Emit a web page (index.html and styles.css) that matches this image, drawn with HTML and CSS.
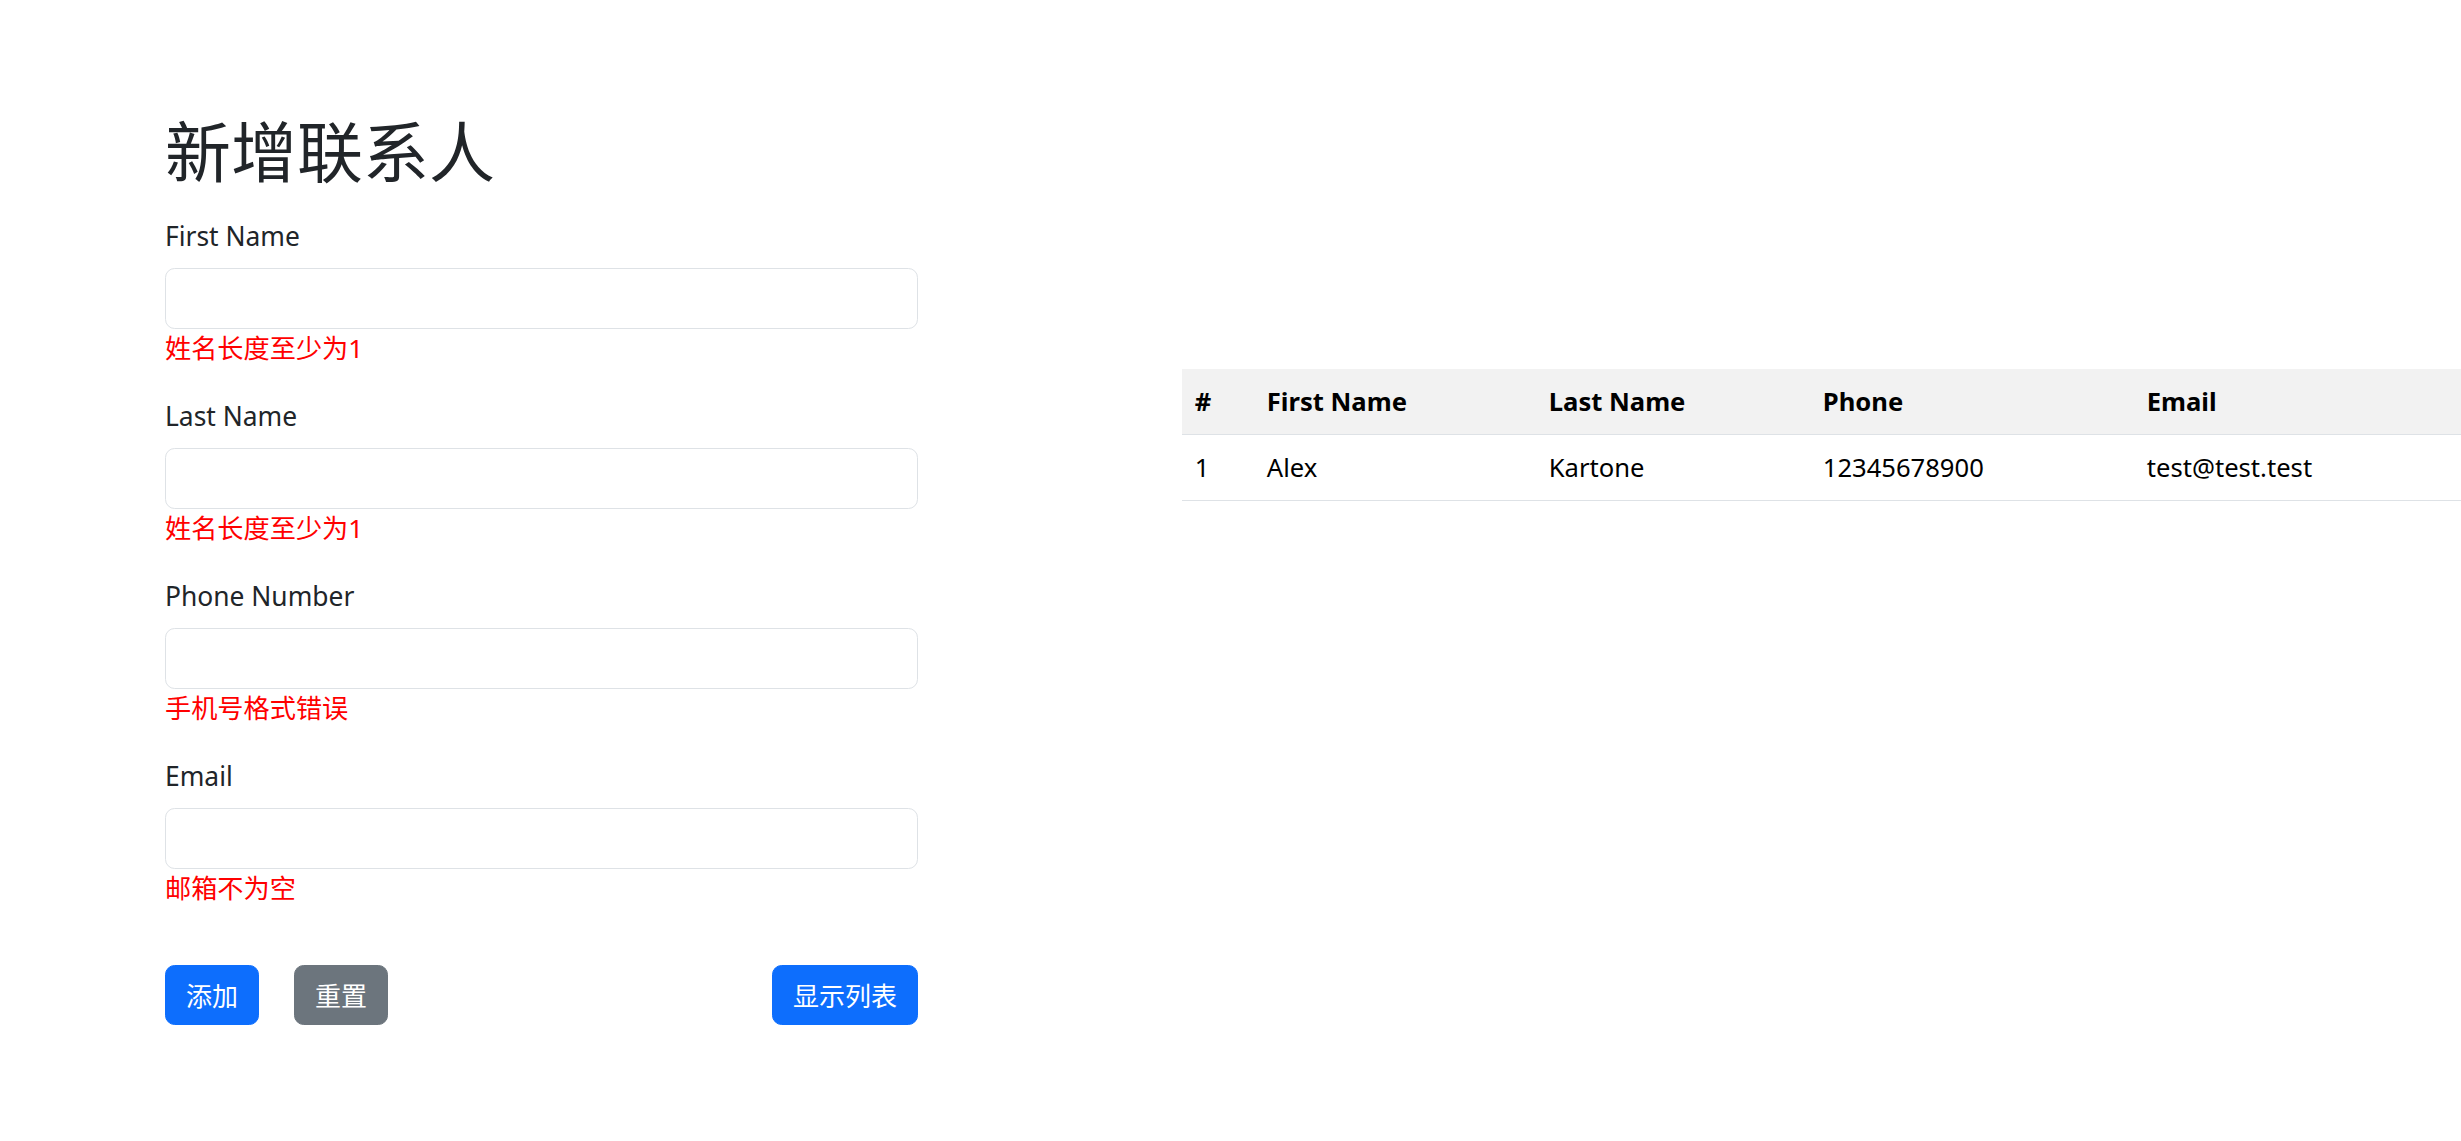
FILE: index.html
```html
<!DOCTYPE html>
<html lang="zh-CN">
<head>
<meta charset="utf-8">
<title>新增联系人</title>
<link rel="stylesheet" href="styles.css">
</head>
<body>
<main class="page">
  <section class="form-col">
    <h1 class="title">新增联系人</h1>
    <form class="contact-form">
      <div class="field">
        <label class="field-label">First Name</label>
        <input class="field-input" type="text">
        <div class="field-error">姓名长度至少为1</div>
      </div>
      <div class="field">
        <label class="field-label">Last Name</label>
        <input class="field-input" type="text">
        <div class="field-error">姓名长度至少为1</div>
      </div>
      <div class="field">
        <label class="field-label">Phone Number</label>
        <input class="field-input" type="text">
        <div class="field-error">手机号格式错误</div>
      </div>
      <div class="field">
        <label class="field-label">Email</label>
        <input class="field-input" type="text">
        <div class="field-error">邮箱不为空</div>
      </div>
      <div class="actions">
        <button type="button" class="btn btn-primary">添加</button>
        <button type="button" class="btn btn-secondary">重置</button>
        <button type="button" class="btn btn-primary btn-right">显示列表</button>
      </div>
    </form>
  </section>
  <section class="table-col">
    <table class="contacts">
      <thead>
        <tr>
          <th class="c-idx">#</th>
          <th class="c-first">First Name</th>
          <th class="c-last">Last Name</th>
          <th class="c-phone">Phone</th>
          <th>Email</th>
        </tr>
      </thead>
      <tbody>
        <tr>
          <td>1</td>
          <td>Alex</td>
          <td>Kartone</td>
          <td>12345678900</td>
          <td>test@test.test</td>
        </tr>
      </tbody>
    </table>
  </section>
</main>
</body>
</html>
```

FILE: styles.css
```css
html, body {
  margin: 0;
  padding: 0;
  background: #fff;
}

body {
  overflow: hidden;
  font-family: "Noto Sans", "Noto Sans CJK SC", sans-serif;
  color: #212529;
}

.page {
  display: flex;
  align-items: flex-start;
  gap: 264px;
  padding: 113px 0 0 165px;
}

.form-col {
  flex: none;
  width: 753px;
}

.title {
  margin: 0 0 27px;
  font-size: 66px;
  line-height: 76.8px;
  font-weight: 400;
  color: #212529;
}

.field {
  margin-bottom: 28.6px;
}

.field-label {
  display: block;
  margin-bottom: 13px;
  font-size: 26.4px;
  line-height: 38.4px;
  color: #212529;
}

.field-input {
  display: block;
  box-sizing: border-box;
  width: 100%;
  height: 61px;
  margin: 0;
  padding: 9.6px 19.2px;
  border: 1px solid #dee2e6;
  border-radius: 9.6px;
  background: #fff;
  font-family: inherit;
  font-size: 25.6px;
  outline: none;
}

.field-error {
  font-size: 26.2px;
  line-height: 39px;
  color: #ff0000;
}

.actions {
  display: flex;
  gap: 35px;
  margin-top: 57px;
}

.btn {
  box-sizing: border-box;
  height: 60px;
  padding: 0 20px;
  border: 1px solid transparent;
  border-radius: 9.6px;
  font-family: "Noto Sans CJK SC", sans-serif;
  font-size: 26px;
  line-height: 1;
  color: #fff;
  cursor: pointer;
}

.btn-primary {
  background: #0d6efd;
  border-color: #0d6efd;
}

.btn-secondary {
  background: #6c757d;
  border-color: #6c757d;
}

.btn-right {
  margin-left: auto;
}

.table-col {
  flex: 1;
  min-width: 0;
  margin-top: 256px;
}

.contacts {
  width: 100%;
  border-collapse: collapse;
  table-layout: fixed;
}

.contacts th,
.contacts td {
  padding: 13px 12.8px;
  text-align: left;
  font-size: 25.6px;
  line-height: 39px;
  color: #000;
  border-bottom: 1px solid #dee2e6;
  white-space: nowrap;
}

.contacts th {
  background: #f2f2f2;
  font-weight: 700;
}

.c-idx { width: 46.4px; }
.c-first { width: 256.4px; }
.c-last { width: 248.4px; }
.c-phone { width: 298.4px; }
```
